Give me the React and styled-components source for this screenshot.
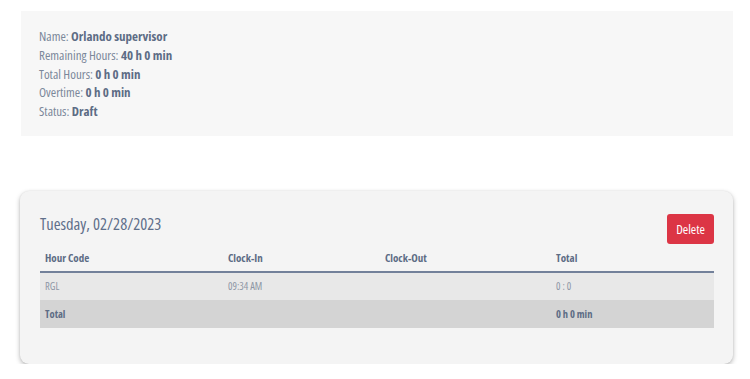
import React from "react";
import styled, { createGlobalStyle } from "styled-components";

const Global = createGlobalStyle`
  html, body { margin: 0; padding: 0; background: #ffffff; }
  body { font-family: "Open Sans", "Liberation Sans", sans-serif; font-stretch: 80%; }
  * { box-sizing: border-box; }
`;

const Page = styled.div`
  width: 750px;
  padding: 11px 17px 0 20px;
  display: flex;
  flex-direction: column;
  gap: 55px;
`;

const InfoBox = styled.div`
  margin-left: 1px;
  background: #f7f7f7;
  padding: 16px 18px 15px;
  min-height: 124px;
`;

const InfoLine = styled.div`
  font-size: 13px;
  line-height: 18.75px;
  color: #7b879a;
  b { color: #5d6c85; font-weight: 700; }
`;

const Card = styled.div`
  background: #f4f4f4;
  border-radius: 9px;
  box-shadow: 0 2px 5px rgba(0, 0, 0, 0.28), 0 0 2px rgba(0, 0, 0, 0.08);
  padding: 23px 19px 36px 20px;
`;

const CardHeader = styled.div`
  display: flex;
  justify-content: space-between;
  align-items: flex-start;
`;

const Title = styled.div`
  font-size: 16.5px;
  line-height: 20px;
  color: #5f6f8a;
`;

const DeleteButton = styled.button`
  width: 47px;
  height: 30px;
  background: #dc3545;
  color: #ffffff;
  border: none;
  border-radius: 3px;
  font-family: inherit;
  font-stretch: 80%;
  font-size: 13px;
  padding: 0;
`;

const Table = styled.table`
  width: 100%;
  border-collapse: collapse;
  table-layout: fixed;
  margin-top: 1px;
`;

const HeadCell = styled.th`
  text-align: left;
  font-size: 11px;
  font-weight: 700;
  color: #5d6c85;
  padding: 0 5px;
  height: 27px;
  border-bottom: 2px solid #73819a;
  width: ${(p) => p.$w}px;
`;

const Row = styled.tr`
  background: ${(p) => (p.$total ? "#d4d4d4" : "#e8e8e8")};
`;

const Cell = styled.td`
  font-size: 10.5px;
  height: 28px;
  padding: 0 5px;
  color: ${(p) => (p.$bold ? "#5d6c85" : "#8d96a5")};
  font-weight: ${(p) => (p.$bold ? 700 : 400)};
`;

export default function App() {
  return (
    <>
      <Global />
      <Page>
        <InfoBox>
          <InfoLine>Name: <b>Orlando supervisor</b></InfoLine>
          <InfoLine>Remaining Hours: <b>40 h 0 min</b></InfoLine>
          <InfoLine>Total Hours: <b>0 h 0 min</b></InfoLine>
          <InfoLine>Overtime: <b>0 h 0 min</b></InfoLine>
          <InfoLine>Status: <b>Draft</b></InfoLine>
        </InfoBox>
        <Card>
          <CardHeader>
            <Title>Tuesday, 02/28/2023</Title>
            <DeleteButton>Delete</DeleteButton>
          </CardHeader>
          <Table>
            <thead>
              <tr>
                <HeadCell $w={183}>Hour Code</HeadCell>
                <HeadCell $w={157}>Clock-In</HeadCell>
                <HeadCell $w={171}>Clock-Out</HeadCell>
                <HeadCell>Total</HeadCell>
              </tr>
            </thead>
            <tbody>
              <Row>
                <Cell>RGL</Cell>
                <Cell>09:34 AM</Cell>
                <Cell></Cell>
                <Cell>0 : 0</Cell>
              </Row>
              <Row $total>
                <Cell $bold>Total</Cell>
                <Cell></Cell>
                <Cell></Cell>
                <Cell $bold>0 h 0 min</Cell>
              </Row>
            </tbody>
          </Table>
        </Card>
      </Page>
    </>
  );
}
